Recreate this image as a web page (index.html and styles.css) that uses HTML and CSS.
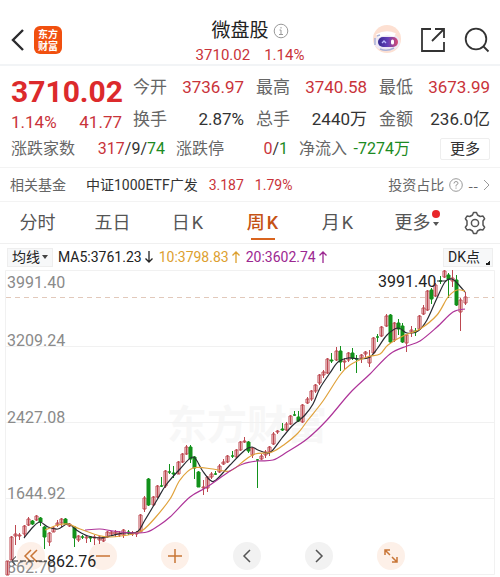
FILE: index.html
```html
<!DOCTYPE html>
<html lang="zh-CN">
<head>
<meta charset="utf-8">
<meta name="viewport" content="width=device-width, initial-scale=1">
<title>微盘股</title>
<link rel="stylesheet" href="styles.css">
</head>
<body>
<header class="topbar">
  <div class="side">
    <button class="icon-btn" aria-label="返回"><svg width="16" height="24" viewBox="0 0 16 24"><path d="M13 2 3 12l10 10" fill="none" stroke="#2b2b2e" stroke-width="2.4"/></svg></button>
    <a class="logo" href="#"><span>东方</span><span>财富</span></a>
  </div>
  <div class="heading">
    <h1>微盘股<svg width="16" height="16" viewBox="0 0 16 16" fill="none" stroke="#999"><circle cx="8" cy="8" r="6.8"/><path d="M6.5 7H8v4.5M6 11.5h4M8 4v1.5"/></svg></h1>
    <div class="sub up"><span>3710.02</span><span>1.14%</span></div>
  </div>
  <div class="side actions">
    <button class="icon-btn" aria-label="智能助手"><svg width="30" height="30" viewBox="0 0 30 30"><defs><linearGradient id="visor"><stop offset="0" stop-color="#352a91"/><stop offset=".5" stop-color="#6540b8"/><stop offset="1" stop-color="#d94c72"/></linearGradient></defs><circle cx="15" cy="14" r="14" fill="#fde0d2"/><ellipse cx="15" cy="17" rx="13" ry="9" fill="#eee9f5"/><path d="M5 11q9-5 18-1" fill="none" stroke="#fff" stroke-width="4"/><path d="M3 13v7M5 11l3-1M8 24q7 3 14-1" fill="none" stroke="#aab1d5" stroke-width="1.5"/><rect x="6" y="12" width="20" height="10" rx="5" fill="url(#visor)"/><path d="m10 18 2-2 2 2" fill="none" stroke="#b9baff" stroke-width="1.3"/><rect x="19" y="14.500" width="3" height="5" rx="1.5" fill="#fff"/></svg></button>
    <button class="icon-btn" aria-label="分享"><svg width="26" height="26" viewBox="0 0 26 26" fill="none" stroke="#333" stroke-width="1.8"><path d="M11 2H2v22h22v-9M15 2h9v9M24 2 12 14"/></svg></button>
    <button class="icon-btn" aria-label="搜索"><svg width="26" height="26" viewBox="0 0 26 26" fill="none" stroke="#333" stroke-width="1.8"><circle cx="12" cy="12" r="10.300"/><path d="m19.500 19.500 5 5"/></svg></button>
  </div>
</header>

<section class="quote">
  <div class="quote-main">
    <div class="price up"><strong>3710.02</strong><div><span>1.14%</span><span>41.77</span></div></div>
    <dl>
      <div><dt>今开</dt><dd class="up">3736.97</dd></div>
      <div><dt>最高</dt><dd class="up">3740.58</dd></div>
      <div><dt>最低</dt><dd class="up">3673.99</dd></div>
      <div><dt>换手</dt><dd>2.87%</dd></div>
      <div><dt>总手</dt><dd>2440万</dd></div>
      <div><dt>金额</dt><dd>236.0亿</dd></div>
    </dl>
  </div>
  <div class="breadth">
    <div class="b1"><span class="label">涨跌家数</span><span><b class="up">317</b>/9/<b class="down">74</b></span></div>
    <div class="b2"><span class="label">涨跌停</span><span><b class="up">0</b>/<b class="down">1</b></span></div>
    <div class="b3"><span class="label">净流入</span><span class="down">-7274万</span></div>
    <button class="more">更多</button>
  </div>
</section>

<section class="fund">
  <span class="label">相关基金</span><a href="#">中证1000ETF广发</a><span class="up">3.187</span><span class="up">1.79%</span>
  <a class="ratio" href="#">投资占比<svg width="14" height="14" viewBox="0 0 14 14" fill="none" stroke="#999"><circle cx="7" cy="7" r="6.300"/><path d="M5 5.500q0-2 2-2t2 1.700Q9 6.500 7 7.200V8.500M7 9.500v1.200"/></svg><span class="dash">--</span><svg width="7" height="12" viewBox="0 0 7 12"><path d="m1 1 5 5-5 5" fill="none" stroke="#999"/></svg></a>
</section>

<nav class="tabs">
  <button>分时</button><button>五日</button><button>日<span>K</span></button><button class="active">周<span>K</span></button><button>月<span>K</span></button>
  <button class="has-dot">更多<i></i></button>
  <button aria-label="设置"><svg width="24" height="24" viewBox="0 0 24 24" fill="none" stroke="#555" stroke-width="1.500" stroke-linejoin="round"><path d="M9.500 4 10.500 1.500h3L14.500 4l2.700 1.500 2.800-.4 1.600 2.600L20 10v4l1.600 2.300L20 18.900l-2.800-.4-2.700 1.500-1 2.500h-3l-1-2.500-2.700-1.500-2.800.4-1.600-2.600L4 14v-4L2.400 7.700 4 5.100l2.800.4z"/><circle cx="12" cy="12" r="3.600"/></svg></button>
</nav>

<div class="legend">
  <button class="chip">均线<i class="tri"></i></button>
  <span>MA5:3761.23<svg width="10" height="14" viewBox="0 0 10 14"><path d="M5 1v11M1.500 8.500 5 12l3.500-3.500"/></svg></span>
  <span class="ma10">10:3798.83<svg width="10" height="14" viewBox="0 0 10 14"><path d="M5 13V2M1.500 5.500 5 2l3.500 3.500"/></svg></span>
  <span class="ma20">20:3602.74<svg width="10" height="14" viewBox="0 0 10 14"><path d="M5 13V2M1.500 5.500 5 2l3.500 3.500"/></svg></span>
  <button class="chip dk">DK点<i class="corner"></i></button>
</div>

<main class="chart">
  <div class="tools">
    <button class="warm" aria-label="最左"><svg width="18" height="18" viewBox="0 0 18 18"><path d="M9 3 3 9l6 6M15 3 9 9l6 6"/></svg></button>
    <button class="warm" aria-label="缩小"><svg width="18" height="18" viewBox="0 0 18 18"><path d="M2 9h14"/></svg></button>
    <button class="warm" aria-label="放大"><svg width="18" height="18" viewBox="0 0 18 18"><path d="M2 9h14M9 2v14"/></svg></button>
    <button aria-label="向左"><svg width="18" height="18" viewBox="0 0 18 18"><path d="m12 3-6 6 6 6"/></svg></button>
    <button aria-label="向右"><svg width="18" height="18" viewBox="0 0 18 18"><path d="m6 3 6 6-6 6"/></svg></button>
    <button class="warm" aria-label="全屏"><svg width="18" height="18" viewBox="0 0 18 18"><path d="M8 3H3v5M3 3l5 5M10 15h5v-5M15 15l-5-5"/></svg></button>
  </div>
  <svg class="plot" viewBox="0 270 500 307" role="img" aria-label="周K线">
    <text class="watermark" x="167" y="439">东方财富</text>
    <path class="grid" d="M5.500 270.500H494.500V574.500H5.500zM6 346.500H494M6 422.500H494M6 498.500H494"/>
    <path class="last" d="M6 297.500H494"/>
    <g class="scale"><text x="7" y="288">3991.40</text><text x="7" y="346">3209.24</text><text x="7" y="423">2427.08</text><text x="7" y="499">1644.92</text><text x="7" y="573">862.76</text></g>
    <g id="candles"></g>
    <g id="averages"></g>
    <g class="mark"><text x="378" y="287">3991.40</text><path d="M437 281h9"/><text x="47" y="567">862.76</text><path d="M16 556.500 11.500 561l4.500 4.500M12 561h35" stroke-dasharray="6 2"/></g>
  </svg>
</main>
<script src="chart.js"></script>
</body>
</html>
```
FILE: styles.css
```css
* { box-sizing: border-box; }
body { margin: 0; background: #fff; color: #333; font: 17px/24px Roboto, "Noto Sans CJK SC", sans-serif; }
button { border: 0; padding: 0; background: none; color: inherit; font: inherit; }
a { color: inherit; text-decoration: none; }
svg { flex: none; }
b { font-weight: 400; }
.up { color: #c9333a; }
.down { color: #1c8a22; }
.label { color: #666; }

.topbar { display: grid; grid-template-columns: 1fr auto 1fr; align-items: center; padding: 14px 10px 0; height: 66px; border-bottom: 2px solid #f2f4f6; }
.side { display: flex; align-items: center; gap: 8px; }
.icon-btn { display: flex; }
.logo { display: flex; flex-direction: column; justify-content: center; align-items: center; width: 28px; height: 28px; border-radius: 6px; background: #f1500f; color: #fff; font: 700 10px/12px "Noto Sans CJK SC", sans-serif; }
.actions { justify-content: flex-end; gap: 18px; }
.heading { padding-top: 4px; text-align: center; }
h1 { display: flex; align-items: center; justify-content: center; gap: 4px; margin: 0; font-size: 19px; line-height: 26px; font-weight: 400; color: #222; }
.sub { display: flex; justify-content: center; gap: 14px; font-size: 15px; line-height: 22px; }

.quote { padding: 6px 10px 6px 11px; border-bottom: 1px solid #f3f3f3; }
.quote-main { display: grid; grid-template-columns: minmax(0, 111fr) minmax(0, 357fr); gap: 11px; }
.price strong { display: block; font-size: 30px; line-height: 40px; color: #dc2a2c; }
.price div { display: flex; justify-content: space-between; line-height: 20px; }
dl { display: grid; grid-template-columns: repeat(3, 1fr); gap: 7px 12px; margin: 3px 0 0; }
dl div, .breadth div { display: flex; justify-content: space-between; white-space: nowrap; }
dt { color: #666; }
dd { margin: 0; }
.breadth { display: flex; align-items: center; gap: 11px; margin-top: 5px; font-size: 16px; }
.b1 { flex: 154; }
.b2 { flex: 112; }
.b3 { flex: 111; }
.more { width: 50px; height: 22px; margin-left: 19px; border: 1px solid #eee; border-radius: 2px; font-size: 15px; line-height: 20px; }

.fund { display: flex; align-items: center; height: 34px; padding: 0 10px; border-bottom: 1px solid #f3f3f3; font-size: 14px; white-space: nowrap; }
.fund > a { margin-left: 20px; }
.fund > .up { margin-left: 11px; }
.fund .ratio { display: flex; align-items: center; gap: 5px; margin-left: auto; color: #666; }
.dash { font-family: "Noto Sans CJK SC", sans-serif; }

.tabs { display: grid; grid-template-columns: repeat(6, 3fr) 2fr; height: 42px; border-bottom: 1px solid #f0f0f0; color: #555; font-size: 18px; }
.tabs button { position: relative; display: flex; align-items: center; justify-content: center; gap: 2px; }
.tabs .active { color: #c55315; font-weight: 500; }
.tabs .active::after { content: ""; position: absolute; bottom: 3px; width: 24px; height: 2px; background: #d9641e; }
.has-dot i { position: absolute; left: 58px; top: 20px; border: 3px solid transparent; border-top: 4px solid #555; }
.has-dot::after { content: ""; position: absolute; left: 57px; top: 8px; width: 8px; height: 8px; border-radius: 50%; background: #e8262a; }

.legend { display: flex; align-items: center; height: 26px; padding: 0 7px; gap: 5px; font-size: 14px; color: #222; white-space: nowrap; }
.legend span { display: flex; align-items: center; gap: 2px; }
.legend span svg { fill: none; stroke: currentColor; stroke-width: 1.3; }
.legend .ma10 { color: #dda02f; }
.legend .ma20 { color: #9c2791; }
.chip { display: flex; align-items: center; gap: 2px; height: 19px; padding: 0 4px; border: 1px solid #eee; background: #f7f8f9; line-height: 18px; }
.tri { border: 3px solid transparent; border-top: 4px solid #444; margin-top: 3px; }
.dk { margin-left: auto; gap: 5px; padding-right: 2px; }
.corner { align-self: flex-end; margin-bottom: 1px; width: 5px; height: 5px; background: linear-gradient(135deg, transparent 50%, #222 50%); }

.chart { position: relative; }
.plot { position: relative; display: block; width: 100%; pointer-events: none; }
.plot text { font-size: 16px; }
.plot .watermark { font: 700 40px "Noto Sans CJK SC", sans-serif; fill: #f7f7f7; }
.grid { fill: none; stroke: #f1f1f1; }
.last { stroke: #e2c9bb; stroke-dasharray: 5 4; }
.scale { fill: #8a8a8a; }
.mark { fill: #222; }
.mark path { fill: none; stroke: #222; }
.candle-up { fill: #fff; stroke: #bd4850; }
.candle-down { fill: #12911b; stroke: #12911b; }
#averages path { fill: none; stroke-width: 1.2; }
.tools { position: absolute; left: -1%; bottom: 7px; display: grid; grid-template-columns: repeat(6, 1fr); justify-items: center; width: 86.4%; }
.tools button { display: flex; align-items: center; justify-content: center; width: 28px; height: 28px; border-radius: 50%; background: #f2f2f2; color: #555; }
.tools .warm { background: #fdf0e8; color: #c87536; }
.tools svg { fill: none; stroke: currentColor; stroke-width: 1.5; }
```
FILE: chart.js
```js
// Each candle: direction, high, body top, body bottom, low (plot units).
const candles = `
u 561 561 575 575|u 536 537 560 560|u 525 534 536 545|u 533 535 536 540|u 525 526 534 537|u 517 519 525 526|d 520 521 524 525|u 515 516 520 521
d 517 518 522 526|d 526 527 537 549|u 532 533 542 546|u 527 528 532 532|u 520 523 525 527|u 518 519 523 527|d 518 519 524 524|u 523 524 526 527
d 526 527 538 547|u 535 536 540 542|d 535 537 537 539|u 535 537 538 543|d 536 537 538 542|u 535 537 538 545|u 536 537 540 544|u 537 538 541 542
u 531 532 537 538|u 531 532 534 536|u 530 532 534 537|u 531 533 535 537|u 529 530 535 538|d 530 532 533 535|u 531 533 534 536|u 531 533 534 537
u 514 515 532 532|u 496 498 509 512|d 478 479 505 506|u 496 497 505 506|u 485 486 497 498|d 477 486 486 487|u 470 471 486 488|d 464 472 472 474
d 466 473 474 478|u 461 462 474 474|u 453 454 462 463|u 445 447 454 455|d 445 447 459 463|d 456 457 468 479|d 471 472 487 487|u 480 487 488 495
u 476 477 488 492|u 472 474 477 479|d 471 474 474 475|u 464 466 472 473|u 459 462 464 465|u 455 456 462 463|d 451 456 456 458|u 449 450 457 458
u 441 442 450 451|u 437 441 442 443|d 441 442 451 453|u 447 448 455 458|d 459 460 460 488|u 454 456 459 460|u 450 452 455 458|u 446 447 452 456
u 432 434 444 445|u 430 431 432 434|d 423 429 430 431|u 422 424 430 431|u 415 416 424 425|d 411 415 415 416|d 411 417 421 422|u 404 405 422 423
u 397 399 403 404|u 390 391 399 401|u 384 385 391 393|u 374 375 383 385|u 370 372 375 378|u 358 359 373 374|d 353 360 361 363|u 347 351 360 361
d 346 351 362 371|u 358 361 362 370|u 352 353 360 362|d 348 353 358 360|d 355 359 359 373|u 354 355 358 363|u 351 352 354 357|u 350 357 363 367
u 337 338 353 354|d 334 337 337 342|u 326 327 336 337|u 314 316 326 327|d 314 315 342 343|u 322 323 340 342|d 319 323 329 335|d 323 326 342 343
u 334 335 343 352|u 326 330 332 337|d 328 331 332 336|u 315 316 329 330|u 305 308 314 315|u 290 291 310 311|d 288 290 299 304|u 283 285 296 297
d 276 281 281 284|u 270 271 277 278|d 273 275 279 298|u 270 278 281 287|d 275 280 305 306|u 298 300 312 331|u 292 297 303 305`
  .trim().split(/[|\n]/).map(row => row.split(" "));

const averages = [
  ["#292b32", "24,538 33,527 40,522 48,527 58,529 68,524 78,531 88,536 100,538 110,536 123,533 137,532 145,520 157,500 166,485 180,469 193,457 202,470 210,480 216,480 230,465 245,450 252,447 258,450 267,453 272,451 282,438 292,426 298,421 305,415 313,404 320,388 330,373 338,362 348,358 360,359 370,357 377,349 387,335 398,328 407,333 418,331 427,320 437,298 445,282 452,279 458,284 465,292"],
  ["#e0a23b", "45,530 58,525 68,524 80,529 97,535 110,537 133,534 143,530 155,518 170,499 180,480 193,468 213,469 230,471 245,460 255,454 272,452 285,444 298,433 308,420 323,401 340,375 350,365 367,357 380,354 388,345 403,336 420,329 437,315 448,297 457,290 465,291"],
  ["#ae3499", "85,530 100,529 113,531 133,533 147,532 158,526 170,517 190,497 207,487 230,471 243,464 257,461 273,460 287,452 307,439 327,420 350,393 370,374 390,354 407,346 420,341 437,327 453,312 465,309"]
];

const draw = (parent, name, attrs) => {
  const node = document.createElementNS("http://www.w3.org/2000/svg", name);
  for (const key in attrs) node.setAttribute(key, attrs[key]);
  parent.append(node);
};

const candleLayer = document.getElementById("candles");
candles.forEach(([dir, high, top, bottom, low], i) => {
  const x = Math.round(7 + 4.16 * i) + 0.5;
  const d = `M${x} ${high}V${low}M${x - 1.5} ${top}h3V${bottom}h-3z`;
  draw(candleLayer, "path", { d, class: dir === "u" ? "candle-up" : "candle-down" });
});

// Smooth curve through the points, with Catmull-Rom tangents.
averages.forEach(([stroke, list]) => {
  const p = list.split(" ").map(s => s.split(",").map(Number));
  let d = `M${p[0]}`;
  for (let i = 0; i < p.length - 1; i++) {
    const a = p[i - 1] || p[i], b = p[i], c = p[i + 1], e = p[i + 2] || c;
    d += `C${b[0] + (c[0] - a[0]) / 6},${b[1] + (c[1] - a[1]) / 6} ${c[0] - (e[0] - b[0]) / 6},${c[1] - (e[1] - b[1]) / 6} ${c}`;
  }
  draw(document.getElementById("averages"), "path", { d, stroke });
});
```
